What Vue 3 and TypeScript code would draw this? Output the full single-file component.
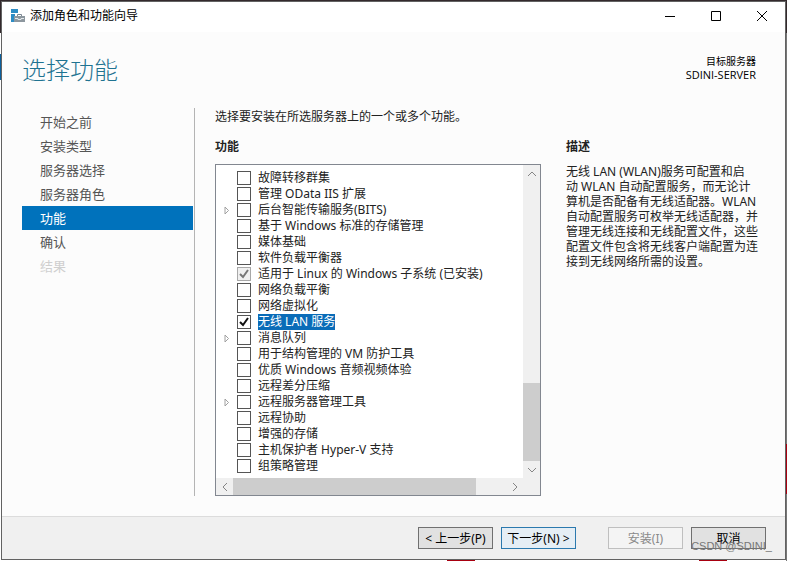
<script setup lang="ts">
import { ref } from 'vue'

interface Step { label: string; state: 'normal' | 'current' | 'disabled' }
interface Feature { name: string; expandable?: boolean; checked?: boolean; installed?: boolean; selected?: boolean }

const steps: Step[] = [
  { label: '开始之前', state: 'normal' },
  { label: '安装类型', state: 'normal' },
  { label: '服务器选择', state: 'normal' },
  { label: '服务器角色', state: 'normal' },
  { label: '功能', state: 'current' },
  { label: '确认', state: 'normal' },
  { label: '结果', state: 'disabled' },
]

const features = ref<Feature[]>([
  { name: '故障转移群集' },
  { name: '管理 OData IIS 扩展' },
  { name: '后台智能传输服务(BITS)', expandable: true },
  { name: '基于 Windows 标准的存储管理' },
  { name: '媒体基础' },
  { name: '软件负载平衡器' },
  { name: '适用于 Linux 的 Windows 子系统 (已安装)', checked: true, installed: true },
  { name: '网络负载平衡' },
  { name: '网络虚拟化' },
  { name: '无线 LAN 服务', checked: true, selected: true },
  { name: '消息队列', expandable: true },
  { name: '用于结构管理的 VM 防护工具' },
  { name: '优质 Windows 音频视频体验' },
  { name: '远程差分压缩' },
  { name: '远程服务器管理工具', expandable: true },
  { name: '远程协助' },
  { name: '增强的存储' },
  { name: '主机保护者 Hyper-V 支持' },
  { name: '组策略管理' },
])
</script>

<template>
  <div class="desktop">
    <div class="window">
      <header class="titlebar">
        <svg class="app-icon" viewBox="0 0 16 16" aria-hidden="true">
          <path d="M1 1h7v4H1zM1 6h4v8H1z" fill="#2d8cc4" />
          <path d="M7.500 8V6.500h4V8" fill="none" stroke="#7b8792" />
          <path d="M4 8h11v6H4z" fill="#8d979f" />
          <path d="M5 10.500h3v1h3v-1h3" fill="none" stroke="#e5e9ec" />
        </svg>
        <span class="caption">添加角色和功能向导</span>
        <button class="win-btn" type="button" aria-label="最小化">
          <svg viewBox="0 0 12 12"><path d="M1 6.500h10" /></svg>
        </button>
        <button class="win-btn" type="button" aria-label="最大化">
          <svg viewBox="0 0 12 12"><path d="M1.500 1.500h9v9h-9z" /></svg>
        </button>
        <button class="win-btn" type="button" aria-label="关闭">
          <svg viewBox="0 0 12 12"><path d="M1 1l10 10M11 1L1 11" /></svg>
        </button>
      </header>

      <div class="heading">
        <h1>选择功能</h1>
        <div class="target"><div class="target-label">目标服务器</div><div>SDINI-SERVER</div></div>
      </div>

      <div class="body">
        <nav class="steps">
          <a v-for="s in steps" :key="s.label" href="#" :class="['step', s.state]">{{ s.label }}</a>
        </nav>
        <main class="content">
          <p class="intro">选择要安装在所选服务器上的一个或多个功能。</p>
          <div class="columns">
            <section class="feature-col">
              <h2>功能</h2>
              <div class="listbox">
                <ul class="features">
                  <li v-for="f in features" :key="f.name">
                    <span class="expander">
                      <svg v-if="f.expandable" viewBox="0 0 6 9"><path d="M1 1v7l3.500-3.500z" /></svg>
                    </span>
                    <label :class="{ selected: f.selected }">
                      <input v-model="f.checked" type="checkbox" :disabled="f.installed" />
                      <span>{{ f.name }}</span>
                    </label>
                  </li>
                </ul>
                <div class="vbar">
                  <button type="button" aria-label="向上滚动"><svg viewBox="0 0 10 10"><path d="M1 7l4-4 4 4" /></svg></button>
                  <div class="vtrack"><div class="vthumb"></div></div>
                  <button type="button" aria-label="向下滚动"><svg viewBox="0 0 10 10"><path d="M1 3l4 4 4-4" /></svg></button>
                </div>
                <div class="hbar">
                  <button type="button" aria-label="向左滚动"><svg viewBox="0 0 10 10"><path d="M7 1L3 5l4 4" /></svg></button>
                  <div class="htrack"><div class="hthumb"></div></div>
                  <button type="button" aria-label="向右滚动"><svg viewBox="0 0 10 10"><path d="M3 1l4 4-4 4" /></svg></button>
                </div>
                <div class="corner"></div>
              </div>
            </section>
            <section class="desc-col">
              <h2>描述</h2>
              <p>无线 LAN (WLAN)服务可配置和启<br />动 WLAN 自动配置服务，而无论计算机是否配备有无线适配器。WLAN 自动配置服务可枚举无线适配器，并管理无线连接和无线配置文件，这些配置文件包含将无线客户端配置为连接到无线网络所需的设置。</p>
            </section>
          </div>
        </main>
      </div>

      <footer class="footer">
        <button class="btn" type="button">&lt; 上一步(P)</button>
        <button class="btn primary" type="button">下一步(N) &gt;</button>
        <button class="btn install" type="button" disabled>安装(I)</button>
        <button class="btn" type="button">取消</button>
        <span class="watermark">CSDN @SDINI_</span>
      </footer>
    </div>
  </div>
</template>

<style>
body {
  background: #fff;
}
</style>

<style scoped>
* {
  box-sizing: border-box;
}
.desktop {
  display: flex;
  height: 100vh;
  padding: 1px;
  background:
    linear-gradient(#a80010, #a80010) 447px 100% / 28px 1px no-repeat,
    linear-gradient(#a80010, #a80010) 699px 100% / 28px 1px no-repeat,
    linear-gradient(#33292c, #33292c) 0 0 / 100% 1px no-repeat,
    linear-gradient(#33292c 0 33px, #fff 33px 54px, #0b5f9c 54px 80px, #fff 80px) 0 0 / 1px 100% no-repeat,
    linear-gradient(#33292c 0 33px, #777 33px 444px, #a80010 444px 494px, #777 494px) 100% 0 / 1px 100% no-repeat,
    #fff;
  font: 12px/16px "Noto Sans", "Noto Sans CJK SC", sans-serif;
  color: #222;
}
.window {
  flex: 1;
  display: flex;
  flex-direction: column;
  position: relative;
  border: 1px solid #626262;
  background: #fcfcfc;
}
.titlebar {
  display: flex;
  align-items: center;
  height: 30px;
  padding: 0 0 3px 8px;
  background: #fff;
}
.app-icon {
  width: 16px;
  height: 16px;
  margin-right: 4px;
}
.caption {
  flex: 1;
  color: #000;
}
.win-btn {
  width: 46px;
  height: 27px;
  padding: 0;
  border: 0;
  background: none;
}
.win-btn svg {
  display: block;
  width: 12px;
  height: 12px;
  margin: 0 auto;
  fill: none;
  stroke: #000;
}
.heading {
  display: flex;
  justify-content: space-between;
  padding: 20px 29px 0 20px;
  height: 76px;
}
h1 {
  margin: 0;
  font-size: 24px;
  line-height: 36px;
  font-weight: 300;
  color: #1f7391;
}
.target {
  padding-top: 3px;
  font: 11px/13px "Open Sans", "Noto Sans CJK SC", sans-serif;
  text-align: right;
  color: #000;
}
.target-label {
  font-size: 10px;
}
.body {
  flex: 1;
  display: flex;
  min-height: 0;
  padding: 0 26px 20px 20px;
}
.steps {
  width: 173px;
  padding: 2px 1px 0 0;
  border-right: 1px solid #b4b4b4;
}
.step {
  display: block;
  padding-left: 18px;
  font-size: 13px;
  line-height: 24px;
  color: #555;
  text-decoration: none;
}
.step.current {
  background: #0072bc;
  color: #fff;
}
.step.disabled {
  color: #cfcfcf;
}
.content {
  flex: 1;
  display: flex;
  flex-direction: column;
  padding: 1px 0 0 20px;
}
.intro {
  margin: 0 0 14px;
}
h2 {
  margin: 0 0 9px;
  font-size: 12px;
  line-height: 16px;
}
.columns {
  flex: 1;
  display: grid;
  grid-template-columns: 326fr 193fr;
  column-gap: 25px;
}
.feature-col {
  display: flex;
  flex-direction: column;
}
.listbox {
  flex: 1;
  display: grid;
  grid-template-columns: 1fr 17px;
  grid-template-rows: 1fr 17px;
  border: 1px solid #828790;
  background: #fff;
}
.features {
  margin: 0;
  padding: 5px 0 0 7px;
  list-style: none;
}
.features li {
  display: flex;
  align-items: center;
  height: 16px;
}
.expander {
  width: 14px;
}
.expander svg {
  display: block;
  width: 6px;
  height: 9px;
  margin-left: 1px;
  fill: none;
  stroke: #a0a0a0;
}
label {
  display: flex;
  align-items: center;
  gap: 7px;
  white-space: nowrap;
}
label.selected span {
  background: #0a6cb8;
  color: #fff;
}
input {
  appearance: none;
  width: 14px;
  height: 14px;
  margin: 0;
  border: 1px solid #555;
  background: #fff;
}
input:checked {
  background: #fff url("data:image/svg+xml,%3Csvg xmlns='http://www.w3.org/2000/svg' viewBox='0 0 12 12'%3E%3Cpath d='M2 6l3 3 5-7' fill='none' stroke='%23111' stroke-width='2'/%3E%3C/svg%3E");
}
input:disabled {
  border-color: #a8a8a8;
  background: #f0f0f0 url("data:image/svg+xml,%3Csvg xmlns='http://www.w3.org/2000/svg' viewBox='0 0 12 12'%3E%3Cpath d='M2 6l3 3 5-7' fill='none' stroke='%23777' stroke-width='2'/%3E%3C/svg%3E");
}
.vbar,
.hbar {
  display: flex;
  background: #f0f0f0;
}
.vbar {
  flex-direction: column;
}
.vbar button,
.hbar button {
  flex: none;
  width: 17px;
  height: 17px;
  padding: 0;
  border: 0;
  background: none;
}
.vbar svg,
.hbar svg {
  display: block;
  width: 10px;
  height: 10px;
  margin: 0 auto;
  fill: none;
  stroke: #858585;
}
.vtrack,
.htrack {
  flex: 1;
  display: flex;
}
.vtrack {
  align-items: flex-end;
}
.vthumb {
  width: 100%;
  height: 28%;
  background: #cdcdcd;
}
.hthumb {
  width: 89%;
  background: #cdcdcd;
}
.corner {
  background: #f0f0f0;
}
.desc-col p {
  margin: 0;
  line-height: 15px;
}
.footer {
  display: flex;
  justify-content: flex-end;
  align-items: flex-start;
  gap: 8px;
  position: relative;
  height: 43px;
  padding: 10px 19px 0;
  border-top: 1px solid #dcdcdc;
  background: #f0f0f0;
}
.btn {
  width: 75px;
  height: 22px;
  padding: 2px 0 0;
  border: 1px solid #707070;
  background: #e1e1e1;
  font: inherit;
  color: #000;
}
.btn.primary {
  border-color: #2b79ae;
  background: #e5eef5;
}
.btn.install {
  margin-left: 24px;
  border-color: #bfbfbf;
  background: #f4f4f4;
  color: #8a8a8a;
}
.watermark {
  position: absolute;
  right: 13px;
  bottom: 6px;
  font: 11px/14px "Liberation Sans", sans-serif;
  color: #777;
}
</style>
